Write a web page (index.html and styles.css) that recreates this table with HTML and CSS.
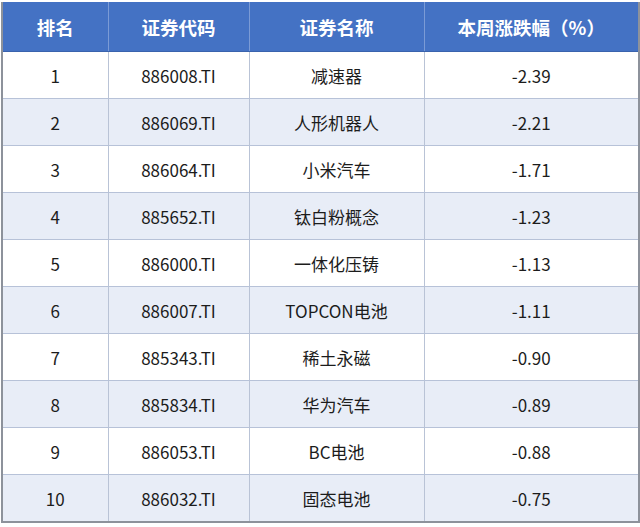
FILE: index.html
```html
<!DOCTYPE html>
<html lang="zh-CN">
<head>
<meta charset="utf-8">
<link rel="stylesheet" href="styles.css">
</head>
<body>
<div class="wrap">
<table class="tbl">
<colgroup><col class="c1"><col class="c2"><col class="c3"><col class="c4"></colgroup>
<thead>
<tr><th>排名</th><th>证券代码</th><th>证券名称</th><th>本周涨跌幅（%）</th></tr>
</thead>
<tbody>
<tr><td>1</td><td>886008.TI</td><td>减速器</td><td>-2.39</td></tr>
<tr><td>2</td><td>886069.TI</td><td>人形机器人</td><td>-2.21</td></tr>
<tr><td>3</td><td>886064.TI</td><td>小米汽车</td><td>-1.71</td></tr>
<tr><td>4</td><td>885652.TI</td><td>钛白粉概念</td><td>-1.23</td></tr>
<tr><td>5</td><td>886000.TI</td><td>一体化压铸</td><td>-1.13</td></tr>
<tr><td>6</td><td>886007.TI</td><td>TOPCON电池</td><td>-1.11</td></tr>
<tr><td>7</td><td>885343.TI</td><td>稀土永磁</td><td>-0.90</td></tr>
<tr><td>8</td><td>885834.TI</td><td>华为汽车</td><td>-0.89</td></tr>
<tr><td>9</td><td>886053.TI</td><td>BC电池</td><td>-0.88</td></tr>
<tr><td>10</td><td>886032.TI</td><td>固态电池</td><td>-0.75</td></tr>
</tbody>
</table>
</div>
</body>
</html>
```
FILE: styles.css
```css
html, body {
  margin: 0;
  padding: 0;
  background: #ffffff;
}
.wrap {
  padding: 2px 0 0 1px;
}
.tbl {
  border-collapse: collapse;
  table-layout: fixed;
  width: 637px;
  border-left: 2px solid #8d929b;
  border-right: 2px solid #8d929b;
  border-bottom: 2px solid #8d929b;
  font-family: "Noto Sans CJK SC", "Noto Sans", sans-serif;
}
.c1 { width: 106px; }
.c2 { width: 141px; }
.c3 { width: 175px; }
.c4 { width: 215px; }
.tbl th {
  background: #4472c4;
  color: #ffffff;
  font-weight: 700;
  font-size: 18.5px;
  height: 49px;
  padding: 0;
  text-align: center;
  border-left: 1px solid #7b9bd6;
  border-bottom: 1px solid #3a63ad;
}
.tbl th:first-child { border-left: none; }
.tbl td {
  height: 46px;
  padding: 0;
  text-align: center;
  font-size: 17px;
  color: #1c1c1c;
  border-left: 1px solid #b9c3d6;
  border-bottom: 1px solid #b7c2d8;
  background: #ffffff;
}
.tbl td:first-child { border-left: none; }
.tbl tbody tr:nth-child(even) td {
  background: #e8edf7;
}
```
